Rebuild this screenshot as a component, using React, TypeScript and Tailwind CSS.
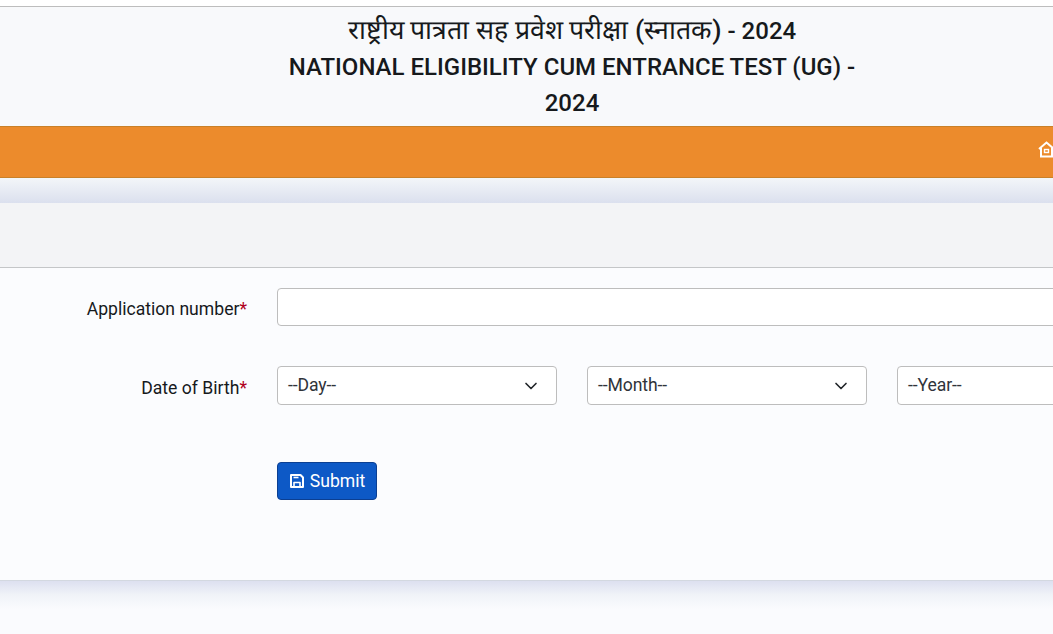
import { ChevronDown } from "lucide-react";

const selects = ["--Day--", "--Month--", "--Year--"];

export default function App() {
  return (
    <div className="h-[634px] w-[1053px] overflow-hidden bg-[#fafbfe] font-['Roboto',sans-serif] text-[#212529]">
      <div className="h-[6px] bg-white" />
      <header className="h-[120px] w-[1144px] border-t border-[#bdbdbd] bg-[#f8f9fb]">
        <div className="mx-auto w-[580px] pt-[5px] text-center text-[24px] font-medium leading-[36px] text-[#16191c]">
          <h1>
            <span className="text-[26.7px]">राष्ट्रीय पात्रता सह प्रवेश परीक्षा (स्नातक)</span> - 2024
          </h1>
          <h2>NATIONAL ELIGIBILITY CUM ENTRANCE TEST (UG) - 2024</h2>
        </div>
      </header>
      <nav className="flex h-[52px] items-center overflow-hidden border-y border-[#c98129] bg-[#ec8b2c] pb-[6px] pl-[1038px]">
        <svg width="17" height="17" viewBox="0 0 17 17" fill="none" stroke="white" strokeWidth="2" className="shrink-0">
          <path d="M1 8 8.5 1.5 16 8" />
          <path d="M3 7v8.5h11V7" />
          <rect x="6.5" y="8.5" width="4" height="3" strokeWidth="1.4" />
        </svg>
      </nav>
      <div className="h-[25px] bg-gradient-to-b from-[#f3f6f9] to-[#dbe0ee]" />
      <main>
        <div className="h-[65px] border-b border-[#c4c6c8] bg-[#f3f4f6]" />
        <form className="h-[313px] w-[1300px] border-b border-[#d3d8e0] bg-[#fbfcfe] pt-[20px]">
          <div className="flex items-center">
            <label className="h-[38px] w-[247px] text-right text-[17.6px] leading-[42px] text-[#16191c]">
              Application number<span className="text-[#b00020]">*</span>
            </label>
            <input className="ml-[30px] h-[38px] w-[900px] rounded border border-[#bdbdbd] bg-white" />
          </div>
          <div className="mt-[40px] flex items-center">
            <label className="h-[39px] w-[247px] text-right text-[17.6px] leading-[44px] text-[#16191c]">
              Date of Birth<span className="text-[#b00020]">*</span>
            </label>
            <div className="ml-[30px] flex gap-[30px]">
              {selects.map((label) => (
                <div
                  key={label}
                  className="flex h-[39px] w-[280px] items-center justify-between rounded border border-[#bdbdbd] bg-white pl-[10px] pr-[15px] text-[17.6px] tracking-[-0.1px] text-[#30343a]"
                >
                  <span>{label}</span>
                  <ChevronDown size={20} strokeWidth={2} className="text-[#212529]" />
                </div>
              ))}
            </div>
          </div>
          <div className="ml-[277px] mt-[57px]">
            <button
              type="button"
              className="flex h-[38px] w-[100px] items-center justify-center gap-[5px] rounded border border-[#0b3f92] bg-[#0d59c6] text-[17.6px] text-white"
            >
              <svg width="16" height="16" viewBox="0 0 16 16" fill="none" stroke="white" strokeWidth="2" strokeLinejoin="round">
                <path d="M2 2h9.5L14 4.5V14H2z" />
                <path d="M5 14V9.5h6V14" strokeWidth="1.6" />
                <path d="M4.5 4.5h5" strokeWidth="1.6" />
              </svg>
              Submit
            </button>
          </div>
        </form>
      </main>
      <div className="h-[28px] bg-gradient-to-b from-[#dde0f0] via-[#f0f3f8] to-[#fafbfe]" />
    </div>
  );
}
